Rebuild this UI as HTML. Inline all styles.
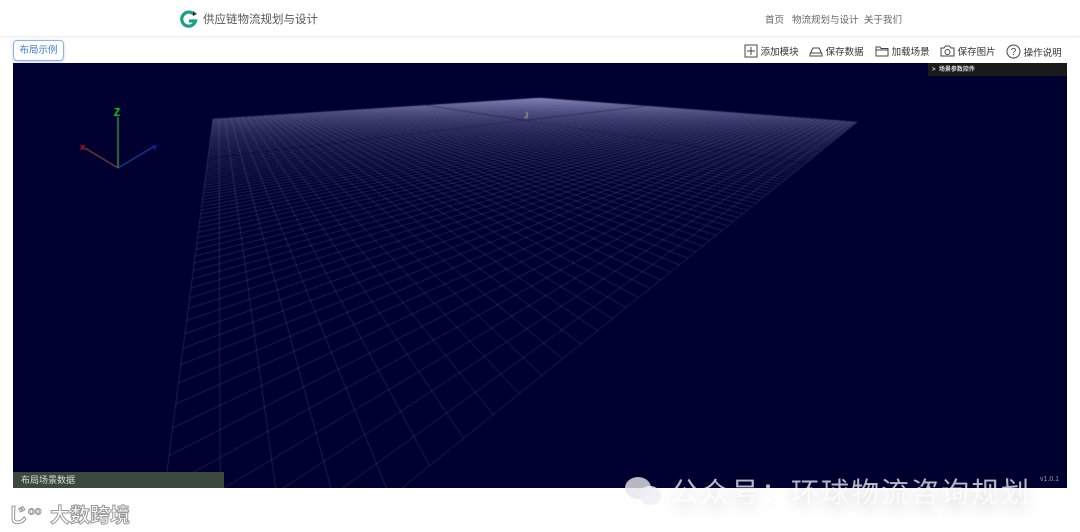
<!DOCTYPE html>
<html><head><meta charset="utf-8">
<style>
*{margin:0;padding:0;box-sizing:border-box}
body{width:1080px;height:532px;background:#fff;position:relative;overflow:hidden;font-family:"Liberation Sans","Noto Sans CJK SC",sans-serif}
.hdr{position:absolute;left:0;top:0;width:1080px;height:37px;border-bottom:1px solid #eee;box-shadow:0 1px 2px rgba(0,0,0,0.04)}
.title{position:absolute;left:203px;top:11px;font-size:11.5px;color:#555}
.nav{position:absolute;top:12px;font-size:9.5px;color:#666}
.btn{position:absolute;left:13px;top:40px;width:51px;height:21px;border:1px solid #8fb0e6;border-radius:4px;font-size:9.5px;color:#3a78d6;text-align:center;line-height:19px;box-shadow:0 1px 3px rgba(60,120,220,0.3)}
.tb{position:absolute;top:44px;font-size:9.5px;color:#333;display:flex;align-items:center}
#cv{position:absolute;left:13px;top:63px}
.panel{position:absolute;left:928px;top:63px;width:139px;height:13px;background:#1a1a1a;color:#ddd;font-size:6px;font-weight:bold;line-height:14px;padding-left:4px}
.bl{position:absolute;left:13px;top:472px;width:211px;height:16px;background:#3c4a3e;color:#ddd;font-size:9px;line-height:16px;padding-left:8px}
.ver{position:absolute;left:1040px;top:476px;font-size:7px;color:#999}
.wm{position:absolute;left:625px;top:471px;font-size:28px;color:rgba(255,255,255,0.72);letter-spacing:2px;text-shadow:0 6px 14px rgba(0,0,0,0.18);white-space:nowrap}
.wm2{position:absolute;left:50px;top:499px;font-size:20px;color:#fff;-webkit-text-stroke:1px #999;font-weight:bold}
</style></head><body>
<div class="hdr">
<svg style="position:absolute;left:180px;top:10px" width="18" height="18" viewBox="0 0 18 18"><path d="M14 4.5A7 7 0 1 0 15.5 11H9" fill="none" stroke="#1aa08a" stroke-width="3.2"/><path d="M13 1l4 3-4 2z" fill="#333"/></svg>
<div class="title">供应链物流规划与设计</div>
<div class="nav" style="left:765px">首页</div>
<div class="nav" style="left:792px">物流规划与设计</div>
<div class="nav" style="left:864px">关于我们</div>
</div>
<div class="btn">布局示例</div>
<div class="tb" style="left:744px"><svg width="14" height="14"><rect x="1" y="1" width="12" height="12" fill="none" stroke="#444"/><path d="M7 3v8M3 7h8" stroke="#444"/></svg>&nbsp;添加模块</div>
<div class="tb" style="left:809px"><svg width="14" height="12"><path d="M1 9L4 3h6l3 6v2H1z M1 8h12" fill="none" stroke="#444"/></svg>&nbsp;保存数据</div>
<div class="tb" style="left:875px"><svg width="14" height="12"><path d="M1 2h4l1 1.5h7V11H1z M1 5h12" fill="none" stroke="#444"/></svg>&nbsp;加载场景</div>
<div class="tb" style="left:940px"><svg width="15" height="12"><path d="M1 3h3l1.5-2h4L11 3h3v8H1z" fill="none" stroke="#444"/><circle cx="7.5" cy="7" r="2.5" fill="none" stroke="#444"/></svg>&nbsp;保存图片</div>
<div class="tb" style="left:1006px"><svg width="15" height="15"><circle cx="7.5" cy="7.5" r="6.5" fill="none" stroke="#444"/><text x="7.5" y="11" font-size="10" text-anchor="middle" fill="#444" font-family="Liberation Sans">?</text></svg>&nbsp;操作说明</div>
<canvas id="cv" width="1054" height="425"></canvas>
<div class="panel">&gt;&nbsp; 场景参数控件</div>
<div class="bl">布局场景数据</div>
<div class="ver">v1.0.1</div>
<div class="wm"><span style="display:inline-block;width:46px;height:28px;vertical-align:-3px;position:relative"><span style="position:absolute;left:0;top:0;width:26px;height:22px;border-radius:50%;background:rgba(230,230,235,0.8)"></span><span style="position:absolute;left:14px;top:9px;width:22px;height:19px;border-radius:50%;background:rgba(240,240,245,0.85)"></span></span>公众号：环球物流咨询规划</div>
<div style="position:absolute;left:8px;top:499px;font-size:20px;color:#fff;-webkit-text-stroke:1px #999;font-weight:bold">じ<sup style="font-size:11px">oo</sup></div>
<div class="wm2">大数跨境</div>
<script>
var c=document.getElementById('cv'),g=c.getContext('2d');
g.fillStyle='#000030';g.fillRect(0,0,1054,425);
var ox=13,oy=63;
var P=[[540,98],[857,122],[137,701],[213,119]].map(function(p){return[p[0]-ox,p[1]-oy]});
function sq2q(p){var x0=p[0][0],y0=p[0][1],x1=p[1][0],y1=p[1][1],x2=p[2][0],y2=p[2][1],x3=p[3][0],y3=p[3][1];
var dx1=x1-x2,dx2=x3-x2,dy1=y1-y2,dy2=y3-y2,sx=x0-x1+x2-x3,sy=y0-y1+y2-y3;
var d=dx1*dy2-dx2*dy1,g7=(sx*dy2-dx2*sy)/d,h=(dx1*sy-sx*dy1)/d;
return[x1-x0+g7*x1,x3-x0+h*x3,x0,y1-y0+g7*y1,y3-y0+h*y3,y0,g7,h];}
var H=sq2q(P);
function m(u,v){var w=H[6]*u+H[7]*v+1;return[(H[0]*u+H[1]*v+H[2])/w,(H[3]*u+H[4]*v+H[5])/w];}
var N=100;g.lineWidth=0.6;
for(var i=0;i<=N;i++){var t=i/N;
g.strokeStyle=(i==N/2)?'rgba(40,40,90,0.9)':'rgba(160,160,210,0.33)';
var a=m(t,0),b=m(t,1);g.beginPath();g.moveTo(a[0],a[1]);g.lineTo(b[0],b[1]);g.stroke();
a=m(0,t);b=m(1,t);g.beginPath();g.moveTo(a[0],a[1]);g.lineTo(b[0],b[1]);g.stroke();}
g.lineWidth=1;
g.strokeStyle='#8c8';g.beginPath();g.moveTo(514,55);g.lineTo(514,49);g.stroke();
g.strokeStyle='#c84';g.beginPath();g.moveTo(514,55);g.lineTo(511,54);g.stroke();
var ax=105,ay=105;
g.strokeStyle='#7c4';g.beginPath();g.moveTo(ax,ay);g.lineTo(ax,54);g.stroke();
g.strokeStyle='#b5643a';g.beginPath();g.moveTo(ax,ay);g.lineTo(72,85);g.stroke();
g.strokeStyle='#2a5fd0';g.beginPath();g.moveTo(ax,ay);g.lineTo(140,84);g.stroke();
g.font='bold 10px "Liberation Sans"';g.fillStyle='#2d2';g.fillText('Z',101,53);
g.font='bold 8px "Liberation Sans"';g.fillStyle='#d22';g.fillText('X',67,87);
g.fillStyle='#23c';g.fillText('Y',139,87);
</script>
</body></html>
